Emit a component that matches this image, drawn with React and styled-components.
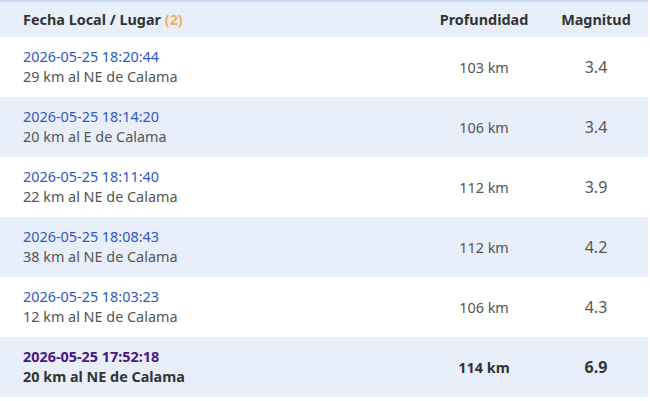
import React from 'react';
import styled, { createGlobalStyle } from 'styled-components';

const GlobalStyle = createGlobalStyle`
  body {
    margin: 0;
    background: #fff;
    font-family: 'Noto Sans', 'Open Sans', sans-serif;
  }
`;

const Table = styled.table`
  width: 648px;
  border-collapse: collapse;
  border-top: 2px solid #c6d8f4;
  font-size: 14.4px;
  color: #444;
`;

const HeadRow = styled.tr`
  background: #e8effb;
  height: 36px;
`;

const Th = styled.th`
  font-weight: 700;
  color: #333;
  text-align: ${(p) => p.align || 'center'};
  padding: ${(p) => (p.align === 'left' ? '0 0 0 23px' : '0')};
  width: ${(p) => p.w || 'auto'};
`;

const Count = styled.span`
  color: #f0b060;
`;

const Row = styled.tr`
  background: ${(p) => (p.shaded ? '#e8effb' : '#fff')};
  height: 60px;
  font-weight: ${(p) => (p.bold ? 700 : 400)};
`;

const PlaceCell = styled.td`
  padding: 0 0 0 23px;
  line-height: 20px;
`;

const DateLink = styled.a`
  display: block;
  color: ${(p) => (p.visited ? '#4b1583' : '#3358c4')};
  text-decoration: none;
`;

const Place = styled.div`
  color: ${(p) => (p.bold ? '#333' : '#555')};
`;

const NumCell = styled.td`
  text-align: center;
  color: ${(p) => (p.bold ? '#333' : '#555')};
  font-size: ${(p) => p.size || '14.4px'};
`;

const quakes = [
  { date: '2026-05-25 18:20:44', place: '29 km al NE de Calama', depth: '103 km', mag: '3.4' },
  { date: '2026-05-25 18:14:20', place: '20 km al E de Calama', depth: '106 km', mag: '3.4' },
  { date: '2026-05-25 18:11:40', place: '22 km al NE de Calama', depth: '112 km', mag: '3.9' },
  { date: '2026-05-25 18:08:43', place: '38 km al NE de Calama', depth: '112 km', mag: '4.2' },
  { date: '2026-05-25 18:03:23', place: '12 km al NE de Calama', depth: '106 km', mag: '4.3' },
  { date: '2026-05-25 17:52:18', place: '20 km al NE de Calama', depth: '114 km', mag: '6.9', bold: true },
];

const App = () => {
  return (
    <>
      <GlobalStyle />
      <Table>
        <thead>
          <HeadRow>
            <Th align="left">
              Fecha Local / Lugar <Count>(2)</Count>
            </Th>
            <Th w="120px">Profundidad</Th>
            <Th w="104px">Magnitud</Th>
          </HeadRow>
        </thead>
        <tbody>
          {quakes.map((q, i) => (
            <Row key={q.date} shaded={i % 2 === 1} bold={q.bold}>
              <PlaceCell>
                <DateLink href="#" visited={q.bold}>{q.date}</DateLink>
                <Place bold={q.bold}>{q.place}</Place>
              </PlaceCell>
              <NumCell bold={q.bold}>{q.depth}</NumCell>
              <NumCell bold={q.bold} size="16px">{q.mag}</NumCell>
            </Row>
          ))}
        </tbody>
      </Table>
    </>
  );
};

export default App;
